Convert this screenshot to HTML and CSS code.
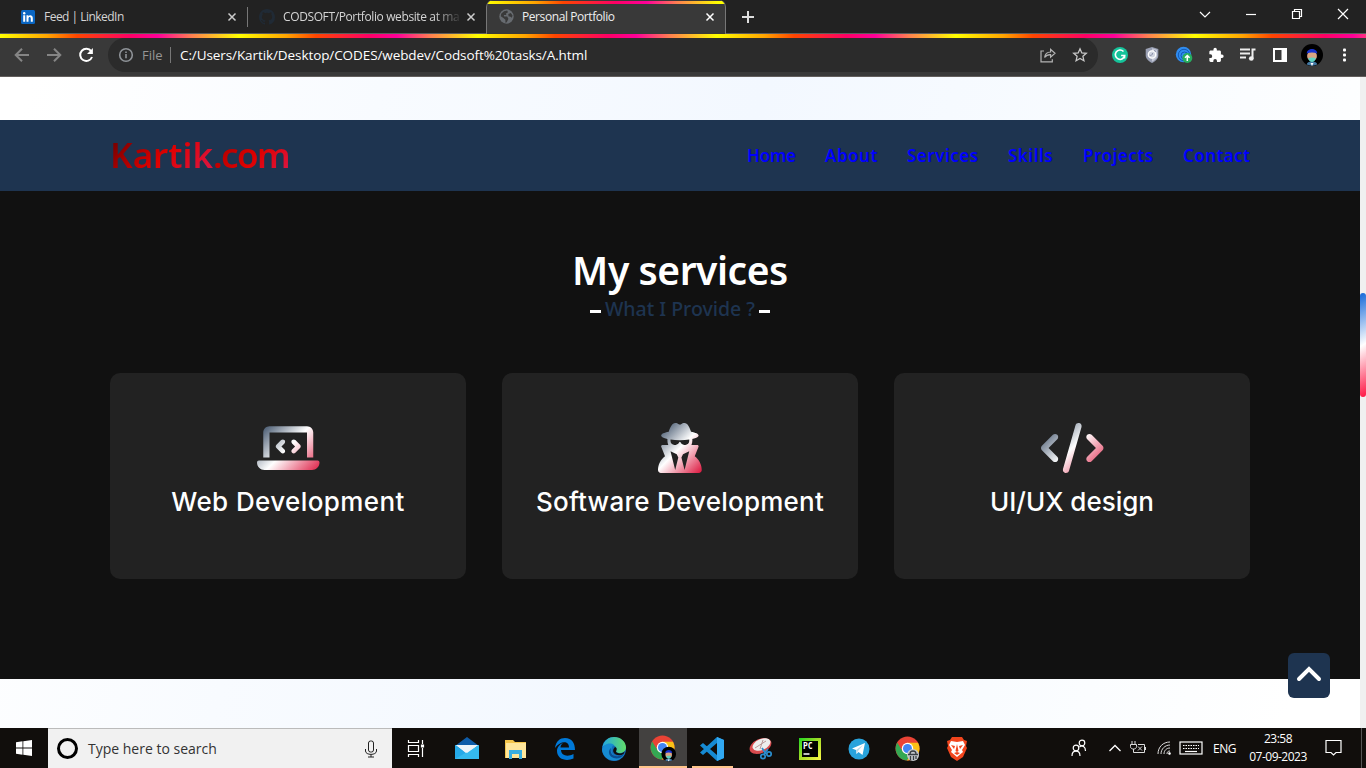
FILE: index.html
```html
<!DOCTYPE html>
<html lang="en">
<head>
<meta charset="utf-8">
<title>Personal Portfolio</title>
<link rel="stylesheet" href="styles.css">
</head>
<body>
<div class="tabstrip">
  <div class="tab tab-first">
    <svg class="favicon" width="14" height="14" viewBox="0 0 14 14"><rect width="14" height="14" rx="1.5" fill="#0a66c2"/><g fill="#fff"><circle cx="3.2" cy="3.2" r="1.2"/><path d="M2.2 5.3h2v6.5h-2zM5.5 5.3h1.9v.9c.9-1.5 4.4-1.5 4.4 1.9v3.7h-2V8.5c0-2.2-2.3-2-2.3 0v3.3h-2z"/></g></svg>
    <span class="tab-title t-feed">Feed | LinkedIn</span>
    <svg class="close" width="8" height="8" viewBox="0 0 8 8"><path d="M.5.5l7 7M7.5.5l-7 7"/></svg>
  </div>
  <div class="tab tab-second">
    <svg class="favicon" width="16" height="16" viewBox="0 0 16 16"><path fill="#202a35" d="M8 0C3.58 0 0 3.58 0 8c0 3.54 2.29 6.53 5.47 7.59.4.07.55-.17.55-.38v-1.49c-2.01.37-2.53-.49-2.69-.94-.09-.23-.48-.94-.82-1.13-.28-.15-.68-.52-.01-.53.63-.01 1.08.58 1.23.82.72 1.21 1.87.87 2.33.66.07-.52.28-.87.51-1.07-1.78-.2-3.64-.89-3.64-3.95 0-.87.31-1.59.82-2.15-.08-.2-.36-1.02.08-2.12 0 0 .67-.21 2.2.82a7.6 7.6 0 0 1 4 0c1.53-1.04 2.2-.82 2.2-.82.44 1.1.16 1.92.08 2.12.51.56.82 1.27.82 2.15 0 3.07-1.87 3.75-3.65 3.95.29.25.54.73.54 1.48v2.19c0 .21.15.46.55.38A8 8 0 0 0 16 8c0-4.42-3.58-8-8-8z"/></svg>
    <span class="tab-title t-cod">CODSOFT/Portfolio website at ma</span>
    <svg class="close" width="8" height="8" viewBox="0 0 8 8"><path d="M.5.5l7 7M7.5.5l-7 7"/></svg>
  </div>
  <div class="tab tab-active">
    <svg class="favicon" width="15" height="15" viewBox="0 0 15 15"><circle cx="7.5" cy="7.5" r="7.2" fill="#676b70"/><path fill="#393939" d="M5 2.2l3.2-.7.8 1.7-2 1.2.3 1.7H4.8l.4 1.5h3l1.2 2.2-1.6 3.5-1.4.5v-3L4 8.700l-2.200-1.500.4-2.400zM9.300 5l2.500-1 1.700 2.500-.6 2.300-1.900-1.400H9.600z"/></svg>
    <span class="tab-title t-active">Personal Portfolio</span>
    <svg class="close close-lit" width="8" height="8" viewBox="0 0 8 8"><path d="M.5.5l7 7M7.5.5l-7 7"/></svg>
  </div>
  <svg class="new-tab" width="12" height="12" viewBox="0 0 12 12"><path d="M6 0v12M0 6h12"/></svg>
  <div class="window-buttons">
    <svg width="46" height="28" viewBox="0 0 46 28"><path d="M18 12l5 5 5-5"/></svg>
    <svg width="46" height="28" viewBox="0 0 46 28"><path d="M18 14.5h10"/></svg>
    <svg width="46" height="28" viewBox="0 0 46 28"><path d="M18.5 11.5h7v7h-7zM20.5 11.5v-2h7v7h-2"/></svg>
    <svg width="46" height="28" viewBox="0 0 46 28"><path d="M18 9l10 10M28 9L18 19"/></svg>
  </div>
</div>
<div class="rainbow"></div>
<div class="toolbar">
  <div class="nav-buttons">
    <svg width="16" height="16" viewBox="0 0 16 16"><path d="M15 8H2M8 1.7L1.7 8 8 14.3"/></svg>
    <svg width="16" height="16" viewBox="0 0 16 16"><path d="M1 8h13M8 1.7L14.3 8 8 14.3"/></svg>
    <svg class="lit" width="16" height="16" viewBox="0 0 16 16"><path d="M13.2 4.2A6.1 6.1 0 1 0 14 10"/><path d="M14.9 1v6H9z" fill="#fff" stroke="none"/></svg>
  </div>
  <div class="omnibox">
    <svg width="16" height="16" viewBox="0 0 16 16" fill="none" stroke="#8f9398" stroke-width="1.6"><circle cx="8" cy="8" r="6.3"/><path d="M8 7v4.3M8 4.4v1.5"/></svg>
    <span class="scheme">File</span><i class="divider"></i>
    <span class="url">C:/Users/Kartik/Desktop/CODES/webdev/Codsoft%20tasks/A.html</span>
    <svg class="share" width="16" height="16" viewBox="0 0 16 16" fill="none" stroke="#b4b4b4" stroke-width="1.2"><path d="M4 4H1v10.8h11.3v-2.500M4.600 10.500c.5-3.700 2.600-5.400 6-5.500V2.300l4.400 3.900-4.400 3.900V7.600c-2.700-.1-4.500.7-6 2.900z"/></svg>
    <svg class="star" width="16" height="16" viewBox="0 0 16 16" fill="none" stroke="#c8c8c8" stroke-width="1.3"><path d="M8 1.8l1.8 4.1 4.5.4-3.4 3 1 4.400L8 11.400l-3.900 2.300 1-4.400-3.400-3 4.500-.4z"/></svg>
  </div>
  <div class="extensions">
    <svg width="32" height="24" viewBox="0 0 32 24"><circle cx="16" cy="12" r="8" fill="#15c39a"/><path d="M19.500 8.500a4.700 4.700 0 1 0 1.200 4h-3.600M20.700 12.500l-.2 3" fill="none" stroke="#fff" stroke-width="1.600"/></svg>
    <svg width="32" height="24" viewBox="0 0 32 24"><path d="M16 4l6.300 2v6.500c0 3.500-3.600 6.200-6.300 7.500-2.700-1.300-6.300-4-6.300-7.500V6z" fill="#9aa0b4"/><path d="M16 5.300l5 1.500v5.700c0 3-3 5.100-5 6.200z" fill="#c5c9d6"/><circle cx="16" cy="11.500" r="3.700" fill="#d0d4df" stroke="#fff" stroke-width="1.300"/><path d="M13.500 12c1.500 1 3 0 3-2M18 7.500l2 1" stroke="#838aa5" fill="none"/></svg>
    <svg width="32" height="24" viewBox="0 0 32 24"><circle cx="15.500" cy="11.500" r="7.700" fill="#2f8cf0"/><g fill="none" stroke="#135bb6"><circle cx="16" cy="12" r="5.700"/><circle cx="16.500" cy="12.500" r="3.500"/><circle cx="17" cy="13" r="1.500"/></g><circle cx="19.300" cy="15" r="5" fill="#27ae60"/><path d="M19.300 18v-5M17 14.800l2.300-2.300 2.300 2.300" fill="none" stroke="#fff" stroke-width="1.500"/></svg>
    <svg width="32" height="24" viewBox="0 0 24 24"><path transform="translate(4 4) scale(.68)" fill="#fff" d="M20.500 11H19V7c0-1.100-.9-2-2-2h-4V3.500a2.500 2.500 0 0 0-5 0V5H4c-1.100 0-2 .9-2 2v3.800h1.500a2.700 2.700 0 0 1 0 5.400H2V20c0 1.100.9 2 2 2h3.800v-1.500a2.700 2.700 0 0 1 5.400 0V22H17c1.100 0 2-.9 2-2v-4h1.500a2.500 2.500 0 0 0 0-5z"/></svg>
    <svg width="32" height="24" viewBox="0 0 32 24"><path d="M8 6.500h10M8 10.500h10M8 14.500h6M20.500 15.500v-9h3" fill="none" stroke="#eee" stroke-width="2"/><ellipse cx="19.300" cy="15.500" rx="2.400" ry="2.200" fill="#eee"/></svg>
    <svg width="32" height="24" viewBox="0 0 32 24"><path d="M9 5h14v14H9zM11 7v10h6.500V7z" fill="#fff" fill-rule="evenodd"/></svg>
    <svg width="32" height="24" viewBox="0 0 32 24"><g id="face"><circle cx="16" cy="12" r="11" fill="#000"/><path d="M10.800 21.500c0-2 2.200-3 5.200-3s5.200 1 5.200 3c-3 1.500-7.400 1.500-10.400 0z" fill="#4479a4"/><circle cx="16" cy="13" r="4.900" fill="#d8a383"/><path d="M10.800 10.500c-.2-6 10.600-6 10.400 0-3.200-1.200-7.200-1.200-10.400 0z" fill="#1732cf"/><path d="M12.300 15c2.500-.8 5-.8 7.400 0-.3 2.700-1.700 4-3.700 4s-3.400-1.300-3.700-4z" fill="#5fd3c3"/><path d="M14.500 20h3L16 23z" fill="#fff"/></g></svg>
    <svg width="32" height="24" viewBox="0 0 32 24" fill="#fff"><rect x="15" y="5.500" width="3" height="3" rx="1"/><rect x="15" y="10.500" width="3" height="3" rx="1"/><rect x="15" y="15.500" width="3" height="3" rx="1"/></svg>
  </div>
</div>

<div class="viewport">
  <div class="page">
    <header class="navbar">
      <a class="logo"><span class="name">Kartik</span><span class="domain">.com</span></a>
      <nav class="menu"><a class="m1">Home</a><a class="m2">About</a><a class="m3">Services</a><a class="m4">Skills</a><a class="m5">Projects</a><a class="m6">Contact</a></nav>
    </header>
    <section class="services">
      <h1>My services</h1>
      <div class="subtitle"><i></i><span>What I Provide ?</span><i></i></div>
      <div class="cards">
        <article class="card">
          <svg width="62.500" height="50" viewBox="0 0 640 512"><defs><linearGradient id="wide" gradientUnits="userSpaceOnUse" x1="32" y1="-32" x2="608" y2="544"><stop stop-color="#1e3450"/><stop offset=".5" stop-color="#fff"/><stop offset="1" stop-color="#dc143c"/></linearGradient></defs><path fill="url(#wide)" d="M64 96c0-35.300 28.700-64 64-64H512c35.300 0 64 28.700 64 64V352H512V96H128V352H64V96zM0 403.200C0 392.600 8.600 384 19.200 384H620.800c10.600 0 19.200 8.600 19.200 19.200c0 42.400-34.400 76.800-76.800 76.800H76.800C34.400 480 0 445.600 0 403.200zM281 209l-31 31 31 31c9.400 9.400 9.400 24.600 0 33.900s-24.600 9.400-33.900 0l-48-48c-9.400-9.400-9.400-24.600 0-33.900l48-48c9.400-9.400 24.600-9.400 33.900 0s9.400 24.600 0 33.900zM393 175l48 48c9.400 9.400 9.400 24.600 0 33.900l-48 48c-9.400 9.400-24.600 9.400-33.900 0s-9.400-24.600 0-33.900l31-31-31-31c-9.400-9.400-9.400-24.600 0-33.900s24.600-9.400 33.900 0z"/></svg>
          <h2 class="c1">Web Development</h2>
        </article>
        <article class="card">
          <svg width="43.750" height="50" viewBox="0 0 448 512"><defs><linearGradient id="narrow" gradientUnits="userSpaceOnUse" x1="-16" y1="16" x2="464" y2="496"><stop stop-color="#1e3450"/><stop offset=".5" stop-color="#fff"/><stop offset="1" stop-color="#dc143c"/></linearGradient></defs><path fill="url(#narrow)" d="M224 16c-6.700 0-10.800-2.800-15.500-6.100C201.900 5.400 194 0 176 0c-30.500 0-52 43.700-66 89.400C62.700 98.100 32 112.200 32 128c0 14.300 25 27.100 64.600 35.900c-.4 4-.6 8-.6 12.100c0 17 3.300 33.200 9.300 48H45.400C38 224 32 230 32 237.400c0 1.700 .3 3.400 1 5l38.800 96.900C28.200 371.800 0 423.800 0 482.300C0 498.700 13.300 512 29.700 512H418.300c16.400 0 29.700-13.300 29.700-29.700c0-58.500-28.200-110.400-71.700-143L415 242.400c.6-1.600 1-3.300 1-5c0-7.400-6-13.400-13.400-13.400H342.700c6-14.800 9.300-31 9.300-48c0-4.100-.2-8.100-.6-12.100C391 155.100 416 142.300 416 128c0-15.800-30.700-29.900-78-38.600C324 43.700 302.500 0 272 0c-18 0-25.900 5.400-32.500 9.900c-4.800 3.300-8.800 6.100-15.500 6.100zm56 208H267.600c-16.500 0-31.100-10.600-36.300-26.200c-2.300-7-12.200-7-14.500 0c-5.200 15.600-19.900 26.200-36.300 26.200H168c-22.100 0-40-17.900-40-40V169.600c28.200 4.100 61 6.400 96 6.400s67.800-2.300 96-6.400V184c0 22.100-17.900 40-40 40zm-88 96l16 32L176 480 128 288l64 32zm128-32L272 480 240 352l16-32 64-32z"/></svg>
          <h2 class="c2">Software Development</h2>
        </article>
        <article class="card">
          <svg width="62.500" height="50" viewBox="0 0 640 512"><path fill="url(#wide)" d="M392.800 1.200c-17-4.900-34.700 5-39.600 22l-128 448c-4.900 17 5 34.700 22 39.600s34.700-5 39.600-22l128-448c4.900-17-5-34.700-22-39.600zm80.600 120.100c-12.500 12.500-12.500 32.800 0 45.300L562.700 256l-89.400 89.400c-12.500 12.500-12.500 32.800 0 45.300s32.800 12.500 45.300 0l112-112c12.500-12.500 12.500-32.800 0-45.300l-112-112c-12.500-12.500-32.800-12.500-45.300 0zm-306.700 0c-12.500-12.500-32.800-12.500-45.300 0l-112 112c-12.500 12.500-12.500 32.800 0 45.300l112 112c12.500 12.500 32.800 12.500 45.300 0s12.500-32.800 0-45.300L77.300 256l89.400-89.400c12.500-12.500 12.500-32.800 0-45.300z"/></svg>
          <h2 class="c3">UI/UX design</h2>
        </article>
      </div>
    </section>
    <div class="to-top"><svg width="24" height="16" viewBox="0 0 24 16"><path d="M2 13L12 3l10 10" fill="none" stroke="#fff" stroke-width="4" stroke-linecap="round"/></svg></div>
  </div>
  <div class="scrollbar"><div class="thumb"></div></div>
</div>

<footer class="taskbar">
  <div class="start"><svg width="16" height="16" viewBox="0 0 16 16" fill="#fff"><path d="M0 2.200L6.500 1.300v6.300H0zM7.300 1.200L16 0v7.600H7.300zM0 8.400h6.500v6.300L0 13.800zM7.300 8.400H16V16l-8.700-1.200z"/></svg></div>
  <div class="search"><i class="cortana"></i><span>Type here to search</span><svg width="14" height="18" viewBox="0 0 14 18" fill="none" stroke="#222"><rect x="4.500" y="1" width="5" height="11" rx="2"/><path d="M1.500 9v2c0 4.500 11 4.500 11 0V9M7 14.500v2.500M4 17h6"/></svg></div>
  <div class="task-view"><svg width="18" height="17" viewBox="0 0 18 17" fill="none" stroke="#fff" stroke-width="1.200"><path d="M1.500 0v2.500h10V0M1.500 5.500h10v6h-10zM1.500 17v-2.500h10V17M15.500 0v4M15.500 8v9"/><path fill="#fff" d="M14.500 5h2v2h-2z"/></svg></div>
  <div class="apps">
    <div class="app"><svg width="26" height="26" viewBox="0 0 26 26"><path d="M1 10L13 1l12 9v2H1z" fill="#0f5ca8"/><path d="M1 9h24v14H1z" fill="#25a9e8"/><path d="M1 9l12 8 12-8v6l-12 3z" fill="#1688d2"/><path d="M2 9h22L13 18z" fill="#eef4f9"/><path d="M1 23L25 9v14z" fill="#35b9ee"/><path d="M2 9h22L13 17z" fill="#eef4f9"/></svg></div>
    <div class="app"><svg width="24" height="24" viewBox="0 0 24 24"><path d="M1 3h8l2 2h11v16H1z" fill="#f4c54b"/><path d="M2 6h20v15H2z" fill="#ffe69b"/><path d="M5 13h13v9h-3v-5H8v5H5z" fill="#39aee1"/></svg></div>
    <div class="app"><svg width="24" height="24" viewBox="0 0 24 24"><path d="M2 11C3 4 7 1 12 1c7 0 10 5 10 12H8c.2 6 7 7 12.500 4v4.500C13 25 4 22 4 14c0-4 3-7 6-8-2 1.500-2.500 3-2.500 4.500H16C16 3 7 4 2 11z" fill="#0078d7"/></svg></div>
    <div class="app"><svg width="26" height="26" viewBox="0 0 26 26"><defs><linearGradient id="wave"><stop stop-color="#22a7df"/><stop offset="1" stop-color="#62dc68"/></linearGradient></defs><circle cx="13" cy="13" r="12" fill="#136bb9"/><path d="M1.500 11C3 4 8 1 13 1c7 0 12 5 12 10.500 0 6-9 7-10 3.500C18 10 8 5 1.500 11z" fill="url(#wave)"/><path d="M1 14c1-6 8-8 12-5-4 2-4 11 4 11 3 0 5-1 6.500-2-6 11-21 7-22.500-4z" fill="#168bd2"/><path d="M10 12c-2 7 5 11 13 6-4 7-14 5-15-1-.3-2 .5-4 2-5z" fill="#0b4d91"/><path d="M14 11c3 1 1 4 1 5 2 2 7 2 9-1l-1.500 3c-5 3-12 0-10-5z" fill="#110e0c"/></svg></div>
    <div class="app app-active"><svg width="27" height="27" viewBox="0 0 27 27"><g id="chrome"><circle cx="12.500" cy="12.500" r="12" fill="#ea4335"/><path d="M2.200 6.500A12 12 0 0 0 12 24.500l5.500-9-9.800 0z" fill="#34a853"/><path d="M12 24.500A12 12 0 0 0 23 6.800H12.500l5 8.700z" fill="#fbc116"/><circle cx="12.500" cy="12.500" r="5.700" fill="#fff"/><circle cx="12.500" cy="12.500" r="4.500" fill="#4285f4"/></g><use href="#face" transform="translate(8 11) scale(.67)"/></svg></div>
    <div class="app app-open"><svg width="26" height="26" viewBox="0 0 26 26"><path d="M18 1l7 3v18l-7 3L1 9.500 4 7l14 12V7L4 19l-3-2.500z" fill="#168ad3"/><path d="M18 1l7 3v18l-7 3z" fill="#31a8f2"/></svg></div>
    <div class="app"><svg width="26" height="26" viewBox="0 0 26 26"><ellipse cx="12.500" cy="10" rx="11.500" ry="7" fill="#d94b4e" transform="rotate(-24 12.500 10)"/><ellipse cx="13.500" cy="8.500" rx="9.500" ry="5.500" fill="#eee" transform="rotate(-24 13.500 8.500)"/><path d="M7 12l11-7M12 13l3-9" stroke="#b99"/><g fill="none" stroke="#2a8dce" stroke-width="1.700"><path d="M14 12l4 6M20 13l-4 5"/><circle cx="15" cy="20.500" r="2.200"/><circle cx="21" cy="18" r="2.200"/></g></svg></div>
    <div class="app"><svg width="24" height="24" viewBox="0 0 24 24"><defs><linearGradient id="pc" x2="1" y2="1"><stop stop-color="#21d722"/><stop offset=".5" stop-color="#a8dd27"/><stop offset="1" stop-color="#fcf84a"/></linearGradient></defs><rect x="1" y="1" width="22" height="22" fill="url(#pc)"/><rect x="4" y="4" width="16" height="16"/><text x="5" y="12" class="pc">PC</text><path d="M5.500 17h6" stroke="#fff" stroke-width="1.500"/></svg></div>
    <div class="app"><svg width="22" height="22" viewBox="0 0 22 22"><circle cx="11" cy="11" r="10.500" fill="#29a3dc"/><path d="M4 10.500L17 5l-2.500 12-4-3-2 2-.5-4z" fill="#fff"/><path d="M8 12l7-5-5 6-1.500 3z" fill="#bddbea"/></svg></div>
    <div class="app"><svg width="26" height="26" viewBox="0 0 26 26"><use href="#chrome"/><circle cx="18" cy="19" r="6" fill="#c5c8cc"/><path d="M13 18.500h10M15 18c0-4 6-4 6 0M15.500 20v4M18.500 20v4M21 20v3" stroke="#383d43" fill="none" stroke-width="1.300"/></svg></div>
    <div class="app"><svg width="24" height="26" viewBox="0 0 24 26"><path d="M7 1h10l2 3 3 1-1 5 1 2-4 9-6 4-6-4-4-9 1-2-1-5 3-1z" fill="#f2451d"/><path d="M6 5l6 1 6-1 2 4-3 5 1 2-6 5-6-5 1-2-3-5z" fill="#fff"/><path d="M6 9l4 1-1 3zM18 9l-4 1 1 3zM12 8l1.500 7-1.500 1-1.500-1zM9 17l3-1 3 1-3 2z" fill="#f2451d"/></svg></div>
  </div>
  <div class="tray">
    <svg class="people" width="16" height="18" viewBox="0 0 16 18" fill="none" stroke="#fff" stroke-width="1.200"><circle cx="5" cy="9" r="2.800"/><path d="M1 17c0-6.500 8-6.500 8 0"/><circle cx="11" cy="4" r="2.800"/><path d="M8.500 8c3-2.500 6 0 6 4"/></svg>
    <svg class="chev" width="12" height="8" viewBox="0 0 12 8" fill="none" stroke="#fff" stroke-width="1.300"><path d="M.5 7L6 1.500 11.500 7"/></svg>
    <svg class="power" width="17" height="14" viewBox="0 0 17 14" fill="none" stroke="#ddd"><path d="M2 0v3M5 0v3M.5 3.500h6v2c0 2-1.500 2.500-3 2.500s-3-.5-3-2.500zM3.500 8v3.500h11v-8H8M15.500 6v3M8 5.500l4 4M12 5.500l-4 4"/></svg>
    <svg class="wifi" width="14" height="14" viewBox="0 0 14 14" fill="none" stroke="#ddd"><path d="M1 13C1 6 6 1 13 1M4 13c0-5 4-9 9-9M7 13c0-3.500 2.500-6 6-6M10 13c0-2 1-3 3-3"/><circle cx="12.500" cy="12.500" r="1" fill="#fff"/></svg>
    <svg class="keys" width="24" height="14" viewBox="0 0 24 14" fill="none" stroke="#fff" stroke-width="1.200"><rect x="1" y="1" width="22" height="12"/><path d="M4 4.500h16M4 7.500h16" stroke-dasharray="1.500 1"/><path d="M6 10.500h12"/></svg>
    <span class="lang">ENG</span>
    <div class="clock"><span>23:58</span><span class="date">07-09-2023</span></div>
    <svg class="notice" width="18" height="18" viewBox="0 0 18 18" fill="none" stroke="#fff" stroke-width="1.200"><path d="M1 1.500h15v12h-5L8.500 16 6 13.500H1z"/></svg>
  </div>
  <i class="desktop-edge"></i>
</footer>
</body>
</html>
```
FILE: styles.css
```css
* { box-sizing: border-box; }
body { margin: 0; width: 1366px; height: 768px; overflow: hidden; display: flex; flex-direction: column; font-family: "Open Sans", "Noto Sans", sans-serif; background: #222; }
svg { display: block; flex: none; overflow: visible; }
span { white-space: nowrap; }

.tabstrip { height: 34px; flex: none; display: flex; background: #222; border-bottom: 1px solid #5c5c5c; }
.tab { display: flex; align-items: center; height: 33px; flex: none; color: #d4d4d4; font-size: 12px; }
.tab-first { width: 248px; padding: 0 12px 0 21px; }
.tab-second { width: 238px; padding: 0 11px 0 11px; position: relative; }
.tab-second::before { content: ""; position: absolute; left: -1px; top: 7px; width: 1px; height: 20px; background: #777; }
.tab-active { width: 240px; height: 34px; padding: 0 11px 1px 12px; background: #393939; border: 1px solid #777; border-top: 0; border-bottom: 0; border-radius: 7px 7px 0 0; position: relative; color: #eee; overflow: hidden; }
.tab-active::before { content: ""; position: absolute; left: 0; top: 1px; width: 238px; height: 3px; background: linear-gradient(90deg, #ff0 0%, #ffa500 20%, #ff4500 32%, #ff0066 54%, #ff0099 67%, #ff8050 80%, #ff0 97%); }
.favicon { margin-right: 9px; }
.tab-second .favicon { margin-right: 8px; }
.tab-active .favicon { margin-right: 8px; }
.tab-title { flex: 1; }
.t-feed { letter-spacing: -.52px; }
.t-cod { letter-spacing: -.38px; margin-right: 8px; -webkit-mask-image: linear-gradient(90deg, #000 86%, transparent 102%); mask-image: linear-gradient(90deg, #000 86%, transparent 102%); }
.t-active { letter-spacing: -.42px; }
.close { fill: none; stroke: #ccc; stroke-width: 1.5; }
.close-lit { stroke: #fff; }
.new-tab { margin: 11px 0 0 16px; fill: none; stroke: #ddd; stroke-width: 2; }
.window-buttons { display: flex; margin-left: auto; fill: none; stroke: #fff; stroke-width: 1.2; }
.rainbow { height: 4px; flex: none; background: repeating-linear-gradient(90deg, #ff0 0, #ffa500 47px, #ff4500 77px, #ff0066 130px, #ff0099 158px, #ff8050 192px, #ff0 239px); }

.toolbar { height: 39px; flex: none; display: flex; background: #393939; border-bottom: 1px solid #625e5c; }
.nav-buttons { width: 108px; padding: 9px 0 0 14px; display: flex; gap: 16px; fill: none; stroke: #858585; stroke-width: 2; }
.nav-buttons .lit { stroke: #fff; }
.omnibox { width: 990px; height: 34px; background: #2b2b2b; border-radius: 17px; display: flex; align-items: center; padding-left: 10px; font-size: 14px; }
.scheme { width: 28px; margin-left: 8px; color: #969696; font-size: 13px; }
.divider { width: 1px; height: 16px; background: #777; margin-right: 9px; }
.url { color: #fff; flex: 1; font-size: 13.5px; letter-spacing: -.09px; }
.share { margin-right: 16px; }
.star { margin-right: 10px; }
.extensions { display: flex; padding: 5px 0 0 6px; }

.viewport { height: 651px; flex: none; display: flex; }
.page { width: 1360px; padding-top: 43px; background: linear-gradient(105deg, #fff 2%, #f8fbff 25%, #f3f8ff 50%, #f9fcff 75%, #fff 95%); position: relative; }
.navbar { height: 71px; padding: 0 110px; display: flex; justify-content: space-between; align-items: center; background: #1e3450; font-family: "Noto Sans", sans-serif; }
.logo { font-size: 35px; font-weight: 600; display: flex; line-height: 50px; padding-bottom: 2px; }
.name, .domain { background: linear-gradient(135deg, #720000 8%, #e00000 52%, #dc143c 88%); -webkit-background-clip: text; background-clip: text; color: transparent; }
.domain { letter-spacing: -1.6px; background-image: linear-gradient(135deg, #980000 0%, #e00000 55%, #dc143c 88%); }
.menu { display: flex; gap: 29px; font-size: 17px; font-weight: 600; color: #00f; letter-spacing: .5px; }
.m1 { width: 49px; letter-spacing: -.2px; }
.m2 { width: 53px; letter-spacing: .5px; }
.m3 { width: 72px; }
.m4 { width: 46px; }
.m5 { width: 71px; }
.m6 { width: 67px; letter-spacing: .4px; }
.services { height: 488px; background: #111; padding: 54px 110px 0; display: flex; flex-direction: column; align-items: center; }
.services h1 { margin: 0; font: 600 39px/50px "Noto Sans", sans-serif; letter-spacing: -.45px; color: #fff; white-space: nowrap; }
.subtitle { height: 28px; display: flex; align-items: center; gap: 4px; color: #1e3450; font: 500 19.5px/28px "Noto Sans", sans-serif; }
.subtitle i { width: 11px; height: 3px; background: #fff; margin-top: 4px; }
.cards { display: grid; grid-template-columns: repeat(3, 356px); gap: 36px; margin-top: 50px; }
.card { height: 206px; border-radius: 10px; background: #222; padding-top: 50px; display: flex; flex-direction: column; align-items: center; }
.card h2 { margin: 9px 0 0; color: #fff; font: 500 26px/40px Inter, sans-serif; white-space: nowrap; }
.card .c1 { letter-spacing: .4px; }
.card .c2 { letter-spacing: .25px; }
.to-top { position: absolute; left: 1288px; top: 576px; width: 42px; height: 45px; border-radius: 6px; background: #1e3450; display: flex; justify-content: center; padding-top: 13px; }
.scrollbar { width: 6px; background: #f0f0f0; padding-top: 216px; }
.thumb { height: 104px; border-radius: 3px; background: linear-gradient(150deg, #1468d8, #fff 50%, #ff1442); }

.taskbar { height: 40px; flex: none; display: flex; background: #110e0c; color: #fff; }
.start { width: 48px; display: grid; place-items: center; }
.search { width: 344px; background: #f1f1f1; border-top: 1px solid #bbb; color: #333; display: flex; align-items: center; padding: 0 14px 0 9px; font-size: 14px; }
.cortana { width: 21px; height: 21px; border: 3px solid #000; border-radius: 50%; margin-right: 10px; }
.search span { flex: 1; }
.task-view { width: 50px; display: grid; place-items: center; padding-right: 2px; }
.apps { display: flex; }
.app { width: 49px; display: grid; place-items: center; padding-top: 1px; }
.app-active { background: #434140; border-bottom: 2px solid #ffc58b; width: 48px; margin-left: 1px; padding-top: 3px; }
.app-open { background: linear-gradient(#ffc58b, #ffc58b) 5px 38px / 41px 2px no-repeat; }
.pc { font: bold 8px "DejaVu Sans Mono", monospace; fill: #fff; }
.tray { display: flex; align-items: center; margin-left: 90px; font-size: 12px; }
.chev { margin-left: 22px; }
.power { margin-left: 9px; }
.wifi { margin-left: 10px; }
.keys { margin-left: 8px; }
.lang { width: 24px; margin-left: 10px; letter-spacing: -.5px; }
.clock { width: 60px; margin-left: 11px; display: flex; flex-direction: column; align-items: center; line-height: 18px; font-size: 12px; letter-spacing: -.5px; }
.notice { margin-left: 17px; }
.desktop-edge { width: 1px; background: #555; margin-left: auto; margin-right: 4px; }
```
